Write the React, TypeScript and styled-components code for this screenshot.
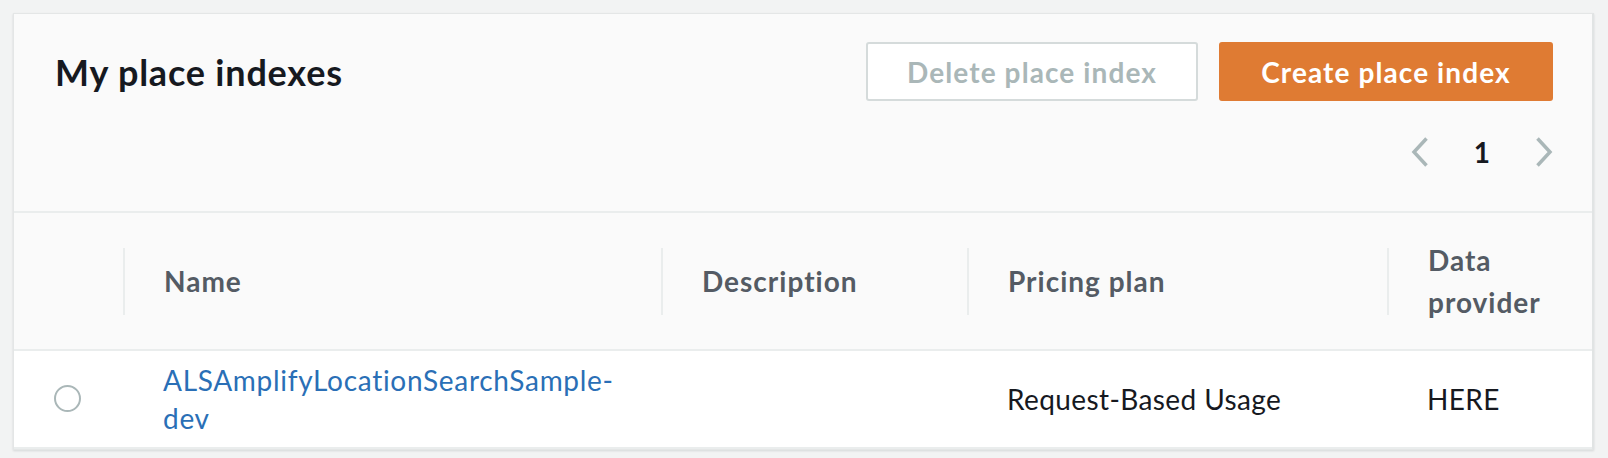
import React from "react";
import styled, { createGlobalStyle } from "styled-components";

const GlobalStyle = createGlobalStyle`
  html, body {
    margin: 0;
    padding: 0;
    background: #f2f3f3;
    font-family: "Lato", "Noto Sans", sans-serif;
    -webkit-font-smoothing: antialiased;
  }
`;

const Page = styled.div`
  width: 1608px;
  height: 458px;
  overflow: hidden;
  padding: 13px 14px 0 13px;
  box-sizing: border-box;
`;

const Card = styled.section`
  background: #fafafa;
  border: 1px solid #e4e6e6;
  border-right: 2px solid #e1e4e4;
  box-shadow: 0 1px 2px rgba(0, 28, 36, 0.12);
`;

const Header = styled.header`
  padding: 28px 39px 0 41px;
  height: 199px;
  box-sizing: border-box;
  border-bottom: 2px solid #eaeded;
`;

const TitleRow = styled.div`
  display: flex;
  align-items: center;
  justify-content: space-between;
`;

const Title = styled.h2`
  margin: 0;
  font-size: 36px;
  font-weight: 700;
  color: #16191f;
  letter-spacing: 0.8px;
`;

const Actions = styled.div`
  display: flex;
  gap: 21px;
`;

const Button = styled.button<{ $primary?: boolean }>`
  height: 59px;
  width: ${p => (p.$primary ? "334px" : "332px")};
  box-sizing: border-box;
  border-radius: 3px;
  font-family: inherit;
  font-size: 28px;
  font-weight: 700;
  letter-spacing: 1.1px;
  cursor: ${p => (p.$primary ? "pointer" : "default")};
  border: 2px solid ${p => (p.$primary ? "#df7b33" : "#d5dbdb")};
  background: ${p => (p.$primary ? "#df7b33" : "#ffffff")};
  color: ${p => (p.$primary ? "#ffffff" : "#aab7b8")};
`;

const Pager = styled.nav`
  display: flex;
  justify-content: flex-end;
  align-items: center;
  gap: 45px;
  margin-top: 33px;
  height: 36px;
`;

const PageNumber = styled.span`
  font-size: 28px;
  font-weight: 700;
  color: #16191f;
`;

const Chevron = styled.svg`
  width: 18px;
  height: 30px;
  display: block;
`;

const Table = styled.table`
  width: 100%;
  border-collapse: collapse;
  border-spacing: 0;
  table-layout: fixed;
`;

const HeadCell = styled.th<{ $divider?: boolean }>`
  position: relative;
  height: 136px;
  padding: 0 16px 0 41px;
  text-align: left;
  font-size: 28px;
  line-height: 42px;
  font-weight: 700;
  letter-spacing: 1px;
  color: #545b64;
  background: #fafafa;
  border-bottom: 2px solid #eaeded;

  &::before {
    content: "";
    display: ${p => (p.$divider ? "block" : "none")};
    position: absolute;
    left: 0;
    top: 35px;
    bottom: 34px;
    width: 2px;
    background: #eaeded;
  }
`;

const BodyCell = styled.td`
  height: 98px;
  padding: 10px 16px 10px 40px;
  box-sizing: border-box;
  background: #ffffff;
  font-size: 28px;
  line-height: 38px;
  letter-spacing: 0.4px;
  color: #16191f;
  vertical-align: middle;
  border-bottom: 2px solid #eaeded;
`;

const RadioCell = styled(BodyCell)`
  padding: 0 0 0 40px;
`;

const Radio = styled.span`
  display: block;
  width: 27px;
  height: 27px;
  box-sizing: border-box;
  border: 2px solid #aab7b8;
  border-radius: 50%;
  background: #ffffff;
  margin-top: -2px;
`;

const Link = styled.a`
  color: #2a6fb6;
  letter-spacing: 0.7px;
  text-decoration: none;
`;

const LeftIcon = () => (
  <Chevron viewBox="0 0 18 30">
    <polyline points="15.5,1.5 3,15 15.5,28.5" fill="none" stroke="#aab7b8" strokeWidth="3.5" />
  </Chevron>
);

const RightIcon = () => (
  <Chevron viewBox="0 0 18 30">
    <polyline points="2.5,1.5 15,15 2.5,28.5" fill="none" stroke="#aab7b8" strokeWidth="3.5" />
  </Chevron>
);

const columns = [
  { key: "select", label: "", width: 109 },
  { key: "name", label: "Name", width: 538 },
  { key: "description", label: "Description", width: 306 },
  { key: "pricing", label: "Pricing plan", width: 420 },
  { key: "provider", label: "Data provider", width: 205 },
];

const rows = [
  {
    name: "ALSAmplifyLocationSearchSample-dev",
    description: "",
    pricing: "Request-Based Usage",
    provider: "HERE",
  },
];

export default function App() {
  return (
    <>
      <GlobalStyle />
      <Page>
        <Card>
          <Header>
            <TitleRow>
              <Title>My place indexes</Title>
              <Actions>
                <Button disabled>Delete place index</Button>
                <Button $primary>Create place index</Button>
              </Actions>
            </TitleRow>
            <Pager>
              <LeftIcon />
              <PageNumber>1</PageNumber>
              <RightIcon />
            </Pager>
          </Header>
          <Table>
            <colgroup>
              {columns.map(col => (
                <col key={col.key} style={{ width: col.width }} />
              ))}
            </colgroup>
            <thead>
              <tr>
                {columns.map((col, i) => (
                  <HeadCell key={col.key} $divider={i > 0}>
                    {col.key === "provider" ? (
                      <>
                        Data
                        <br />
                        provider
                      </>
                    ) : (
                      col.label
                    )}
                  </HeadCell>
                ))}
              </tr>
            </thead>
            <tbody>
              {rows.map(row => (
                <tr key={row.name}>
                  <RadioCell>
                    <Radio />
                  </RadioCell>
                  <BodyCell>
                    <Link href="#">
                      ALSAmplifyLocationSearchSample-
                      <br />
                      dev
                    </Link>
                  </BodyCell>
                  <BodyCell>{row.description}</BodyCell>
                  <BodyCell>{row.pricing}</BodyCell>
                  <BodyCell>{row.provider}</BodyCell>
                </tr>
              ))}
            </tbody>
          </Table>
        </Card>
      </Page>
    </>
  );
}
